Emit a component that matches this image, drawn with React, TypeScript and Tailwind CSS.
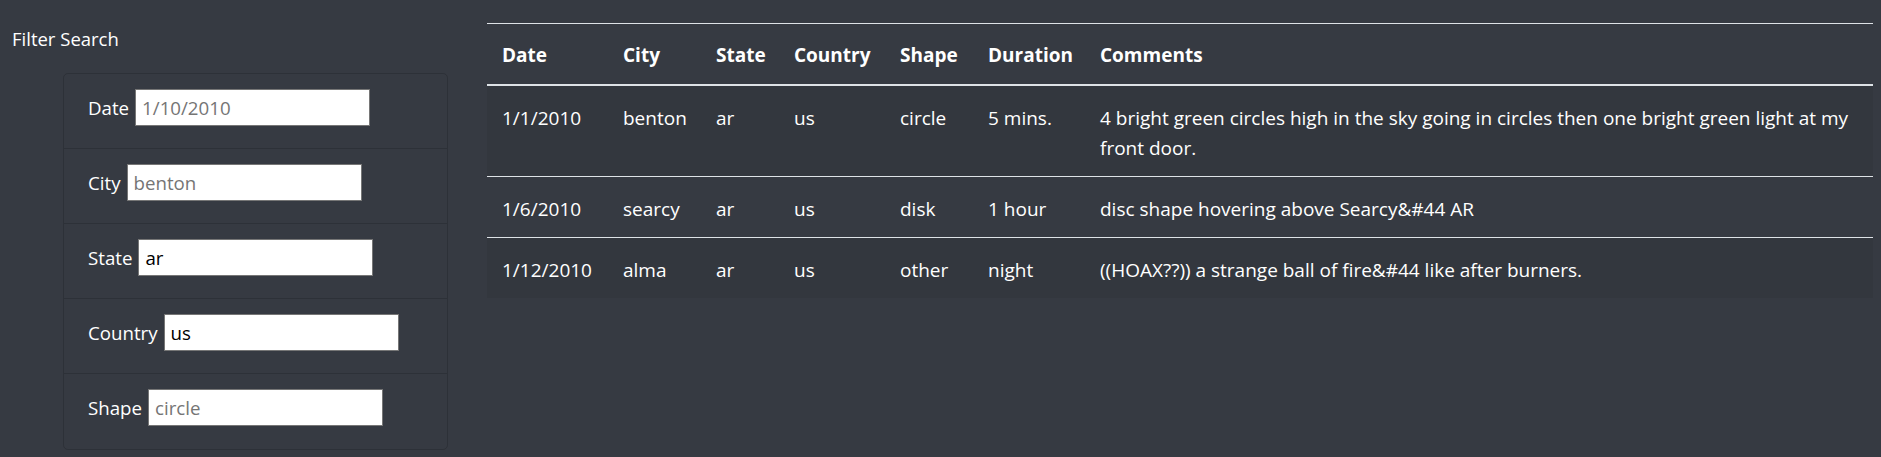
const filters = [
  { label: "Date", value: "", placeholder: "1/10/2010" },
  { label: "City", value: "", placeholder: "benton" },
  { label: "State", value: "ar", placeholder: "" },
  { label: "Country", value: "us", placeholder: "" },
  { label: "Shape", value: "", placeholder: "circle" },
];

const rows = [
  ["1/1/2010", "benton", "ar", "us", "circle", "5 mins."],
  ["1/6/2010", "searcy", "ar", "us", "disk", "1 hour"],
  ["1/12/2010", "alma", "ar", "us", "other", "night"],
];

const headers = ["Date", "City", "State", "Country", "Shape", "Duration", "Comments"];
const colWidths = [121, 93, 78, 106, 88, 112, 788];

function Comment({ i }: { i: number }) {
  if (i === 0)
    return (
      <>
        <span className="whitespace-nowrap">
          4 bright green circles high in the sky going in circles then one bright green light at my
        </span>
        <br />
        front door.
      </>
    );
  if (i === 1) return <>disc shape hovering above Searcy&amp;#44 AR</>;
  return <>((HOAX??)) a strange ball of fire&amp;#44 like after burners.</>;
}

export default function App() {
  return (
    <div className="min-h-screen bg-[#363a42] text-white font-['Open_Sans',sans-serif] flex">
      {/* filter panel */}
      <aside className="w-[487px] shrink-0 pl-[12px] pt-[24px]">
        <h5 className="text-[18.5px] leading-[30px] font-normal">Filter Search</h5>
        <div className="mt-[19px] ml-[51px] w-[385px] rounded-[5px] border border-black/15">
          {filters.map((f, i) => (
            <div
              key={f.label}
              className={
                "h-[75px] px-[24px] pt-[15px] flex items-start " +
                (i < filters.length - 1 ? "border-b border-black/15" : "")
              }
            >
              <div className="flex items-center gap-[6px] h-[37px]">
                <label className="text-[18.7px] leading-[30px] pt-[1px]">{f.label}</label>
                <input
                  className="w-[235px] h-[37px] bg-white border border-[#767676] px-[6px] text-[18.7px] text-black placeholder:text-[#757575] outline-none"
                  defaultValue={f.value}
                  placeholder={f.placeholder}
                />
              </div>
            </div>
          ))}
        </div>
      </aside>

      {/* results table */}
      <main className="flex-1 pt-[23px] pr-[8px]">
        <table className="w-full table-fixed border-collapse text-[19px] leading-[30px]">
          <colgroup>
            {colWidths.map((w, i) => (
              <col key={i} style={{ width: w }} />
            ))}
          </colgroup>
          <thead>
            <tr>
              {headers.map((h) => (
                <th
                  key={h}
                  className="text-left font-bold px-[15px] pt-[16px] pb-[14px] border-t border-b-2 border-[#dee2e6]"
                >
                  {h}
                </th>
              ))}
            </tr>
          </thead>
          <tbody>
            {rows.map((r, i) => (
              <tr key={i} className={i % 2 === 0 ? "bg-black/5" : ""}>
                {r.map((c, j) => (
                  <td key={j} className="align-top px-[15px] pt-[17px] pb-[13px] border-t border-[#dee2e6]">
                    {c}
                  </td>
                ))}
                <td className="align-top px-[15px] pt-[17px] pb-[13px] border-t border-[#dee2e6]">
                  <Comment i={i} />
                </td>
              </tr>
            ))}
          </tbody>
        </table>
      </main>
    </div>
  );
}
